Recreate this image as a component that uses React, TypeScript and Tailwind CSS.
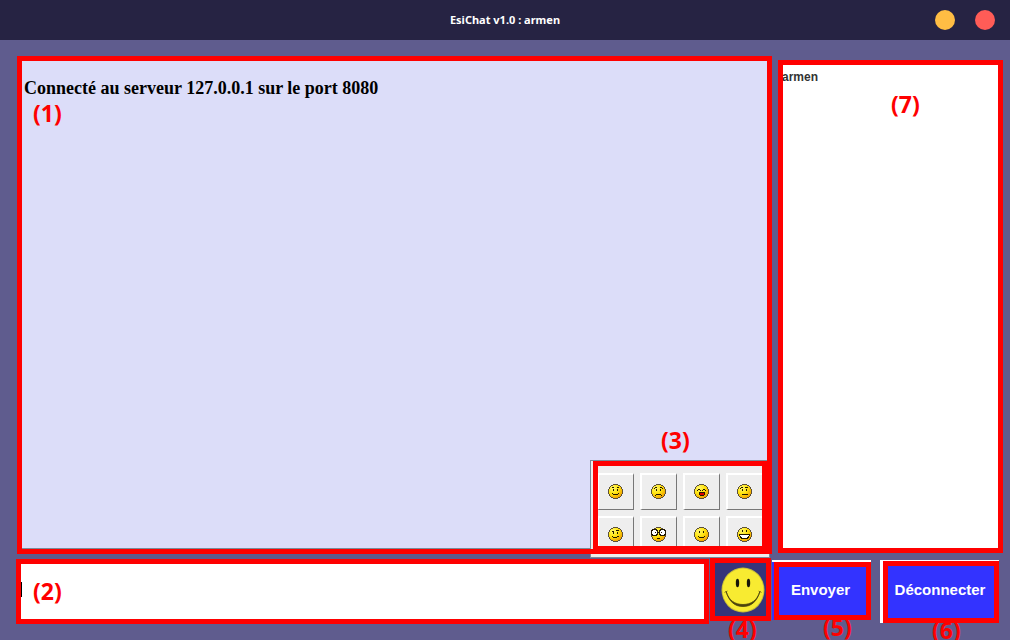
import { useState } from "react";
import type { ReactNode } from "react";

type Pixel = [x: number, y: number, w: number, h: number, color?: string];

// Half-open horizontal extents of each row of the 15 px round face.
const rows: [number, number][] = [
  [5, 10], [3, 12], [2, 13], [1, 14], [1, 14], [0, 15], [0, 15], [0, 15],
  [0, 15], [0, 15], [1, 14], [1, 14], [2, 13], [3, 12], [5, 10],
];

const emoticons: { name: string; pixels: Pixel[] }[] = [
  {
    name: "Sourire malin",
    pixels: [[4, 3, 2, 1], [9, 3, 2, 1], [5, 5, 1, 2], [9, 5, 1, 2], [4, 9, 1, 1], [10, 9, 1, 1], [5, 10, 5, 1]],
  },
  {
    name: "Triste",
    pixels: [[3, 4, 1, 1], [4, 3, 2, 1], [9, 3, 2, 1], [11, 4, 1, 1], [5, 5, 1, 2], [9, 5, 1, 2], [5, 10, 5, 1], [4, 11, 1, 1], [10, 11, 1, 1]],
  },
  {
    name: "Rire",
    pixels: [[3, 6, 1, 1], [4, 5, 2, 1], [6, 6, 1, 1], [8, 6, 1, 1], [9, 5, 2, 1], [11, 6, 1, 1], [5, 8, 6, 1], [5, 9, 1, 2], [10, 9, 1, 2], [6, 11, 4, 1], [6, 9, 4, 2, "#e00000"]],
  },
  {
    name: "Sceptique",
    pixels: [[3, 4, 1, 1], [4, 3, 2, 1], [8, 3, 3, 1], [5, 5, 1, 2], [9, 5, 1, 2], [5, 10, 6, 1]],
  },
  {
    name: "Perplexe",
    pixels: [[4, 4, 2, 1], [8, 3, 3, 1], [5, 5, 1, 2], [9, 5, 1, 2], [5, 10, 4, 1], [9, 9, 2, 1], [4, 9, 1, 1]],
  },
  {
    name: "Surpris",
    pixels: [
      [1, 2, 5, 7], [0, 3, 7, 5], [9, 2, 5, 7], [8, 3, 7, 5],
      [1, 4, 5, 3, "#fff"], [2, 3, 3, 5, "#fff"],
      [9, 4, 5, 3, "#fff"], [10, 3, 3, 5, "#fff"],
      [4, 5, 1, 1], [10, 5, 1, 1], [7, 5, 1, 1], [6, 11, 3, 1],
    ],
  },
  {
    name: "Sourire",
    pixels: [[5, 4, 1, 2], [9, 4, 1, 2], [4, 9, 1, 1], [5, 10, 5, 1], [10, 9, 1, 1]],
  },
  {
    name: "Grand sourire",
    pixels: [[5, 3, 1, 2], [9, 3, 1, 2], [2, 7, 11, 2], [3, 9, 9, 2], [4, 11, 7, 1], [3, 8, 9, 1, "#fff"], [4, 9, 7, 1, "#fff"], [5, 10, 5, 1, "#fff"]],
  },
];

function Face({ pixels }: { pixels: Pixel[] }) {
  return (
    <svg className="size-[15px] shrink-0" viewBox="0 0 15 15" shapeRendering="crispEdges" aria-hidden="true">
      <defs>
        <radialGradient id="face-fill" gradientUnits="userSpaceOnUse" cx="5" cy="4" r="11">
          <stop offset="0" stopColor="#fff66b" />
          <stop offset="0.5" stopColor="#ffe510" />
          <stop offset="1" stopColor="#f0a000" />
        </radialGradient>
      </defs>
      {rows.map(([a, b], y) => (
        <rect key={y} x={a} y={y} width={b - a} height="1" fill="#5c5038" />
      ))}
      {rows.slice(1, 14).map(([a, b], i) => {
        const y = i + 1;
        const start = Math.max(a + 1, rows[y - 1][0], rows[y + 1][0]);
        const end = Math.min(b - 1, rows[y - 1][1], rows[y + 1][1]);
        return <rect key={y} x={start} y={y} width={end - start} height="1" fill="url(#face-fill)" />;
      })}
      {pixels.map(([x, y, w, h, color], i) => (
        <rect key={i} x={x} y={y} width={w} height={h} fill={color ?? "#221800"} />
      ))}
    </svg>
  );
}

function BigSmiley() {
  return (
    <svg className="h-[46px] w-11 shrink-0" viewBox="0 0 44 46" aria-hidden="true">
      <ellipse cx="22" cy="23" rx="21.5" ry="22.5" fill="#c9bd37" />
      <ellipse cx="22" cy="23" rx="20.5" ry="21.5" fill="#f8eb31" />
      <ellipse cx="16.5" cy="16" rx="1.7" ry="4.2" fill="#171507" />
      <ellipse cx="27.5" cy="16" rx="1.7" ry="4.2" fill="#171507" />
      <path d="M5 24C8 35 14 39.500 22 39.500S36 35 39 24C36.500 33.500 30 37.500 22 37.500S7.500 33.500 5 24Z" fill="#4b430d" stroke="#4b430d" strokeWidth="0.8" />
      <path d="M3.500 25.500l3-1.500M37.500 24l3 1.500" stroke="#766b18" strokeWidth="0.8" />
    </svg>
  );
}

function Callout({ place, children }: { place: string; children: ReactNode }) {
  return (
    <div className="pointer-events-none absolute inset-0 z-10 border-5 border-[#ff0000]">
      <span className={`absolute font-['Open_Sans',sans-serif] text-[23px] leading-6 font-bold text-[#ff0000] ${place}`}>
        {children}
      </span>
    </div>
  );
}

export default function App() {
  const [message, setMessage] = useState("");
  return (
    <div className="flex h-screen flex-col overflow-hidden bg-[#5f5c8e] font-['Liberation_Sans',sans-serif]">
      <header className="relative flex h-10 shrink-0 items-center justify-center bg-[#262343]">
        <h1 className="font-['Noto_Sans',sans-serif] text-[11px] leading-4 font-bold text-white">EsiChat v1.0 : armen</h1>
        <div className="absolute right-[15px] flex gap-5">
          <button type="button" aria-label="Réduire" className="size-5 rounded-full bg-[#ffbd44]" />
          <button type="button" aria-label="Fermer" className="size-5 rounded-full bg-[#ff5c57]" />
        </div>
      </header>

      <main className="flex min-h-0 flex-1 flex-col gap-1 pt-4 pr-[7px] pb-4 pl-4">
        <div className="flex min-h-0 flex-1 gap-1.5">
          <section className="relative z-10 ml-px flex-1 border-b-6 border-[#7a8a99] bg-[#dcddf9] px-[7px] pt-[22px]">
            <p className="font-['Liberation_Serif',serif] text-lg leading-5 font-bold text-black">
              Connecté au serveur 127.0.0.1 sur le port 8080
            </p>
            <div className="absolute right-0.5 -bottom-2.5 h-[98px] w-[180px] border border-[#7a8a99] bg-[#eeeeee]">
              <div className="absolute top-0 right-0.5 left-0.5 h-[90px]">
                <div className="grid h-[85px] grid-cols-[repeat(4,37px)] gap-1.5 overflow-hidden pt-3 pl-1">
                  {emoticons.map((e) => (
                    <button
                      key={e.name}
                      type="button"
                      aria-label={e.name}
                      className="flex size-[37px] items-start border-t-2 border-r border-b border-l-2 border-t-white border-r-[#777777] border-b-[#777777] border-l-white bg-[#eeeeee] pt-[9px] pl-[9px]"
                    >
                      <Face pixels={e.pixels} />
                    </button>
                  ))}
                </div>
                <Callout place="-top-[38px] left-[63px]">(3)</Callout>
              </div>
            </div>
            <div className="pointer-events-none absolute inset-x-0 top-0 -bottom-1.5">
              <Callout place="top-10 left-[11px]">(1)</Callout>
            </div>
          </section>

          <aside className="relative mt-1 mb-px w-[225px] bg-white px-1 pt-[9px]">
            <ul aria-label="Utilisateurs connectés">
              <li className="text-xs leading-4 font-bold text-[#333333]">armen</li>
            </ul>
            <Callout place="top-[27px] left-[108px]">(7)</Callout>
          </aside>
        </div>

        <form className="flex h-[66px] shrink-0 items-start gap-px" onSubmit={(e) => e.preventDefault()}>
          <div className="relative mt-px h-[65px] flex-1 bg-white">
            <input
              type="text"
              aria-label="Message"
              value={message}
              onChange={(e) => setMessage(e.target.value)}
              className="size-full px-2 text-sm outline-none"
            />
            <span className="absolute top-[23px] left-[5px] h-[15px] w-px bg-black" />
            <Callout place="top-[15px] left-3">(2)</Callout>
          </div>
          <div className="relative">
            <button type="button" aria-label="Émoticônes" className="flex h-[63px] w-[61px] items-center justify-center bg-[#35347a] pl-1">
              <BigSmiley />
            </button>
            <Callout place="top-[54px] left-[13px]">(4)</Callout>
          </div>
          <div className="mt-0.5 border-t-2 border-white bg-[#3333ff] pl-0.5">
            <div className="relative">
              <button type="submit" className="h-[58px] w-[97px] pr-1 pb-0.5 text-[15px] leading-5 font-bold text-white">Envoyer</button>
              <Callout place="top-12 left-11">(5)</Callout>
            </div>
          </div>
          <div className="mt-0.5 mr-1 ml-2 border-t border-l-3 border-white">
            <div className="relative">
              <button type="button" className="h-[62px] w-[116px] bg-[#3333ff] pr-0.5 pb-1 text-[15px] leading-5 font-bold text-white">Déconnecter</button>
              <Callout place="top-[52px] left-11">(6)</Callout>
            </div>
          </div>
        </form>
      </main>
    </div>
  );
}
